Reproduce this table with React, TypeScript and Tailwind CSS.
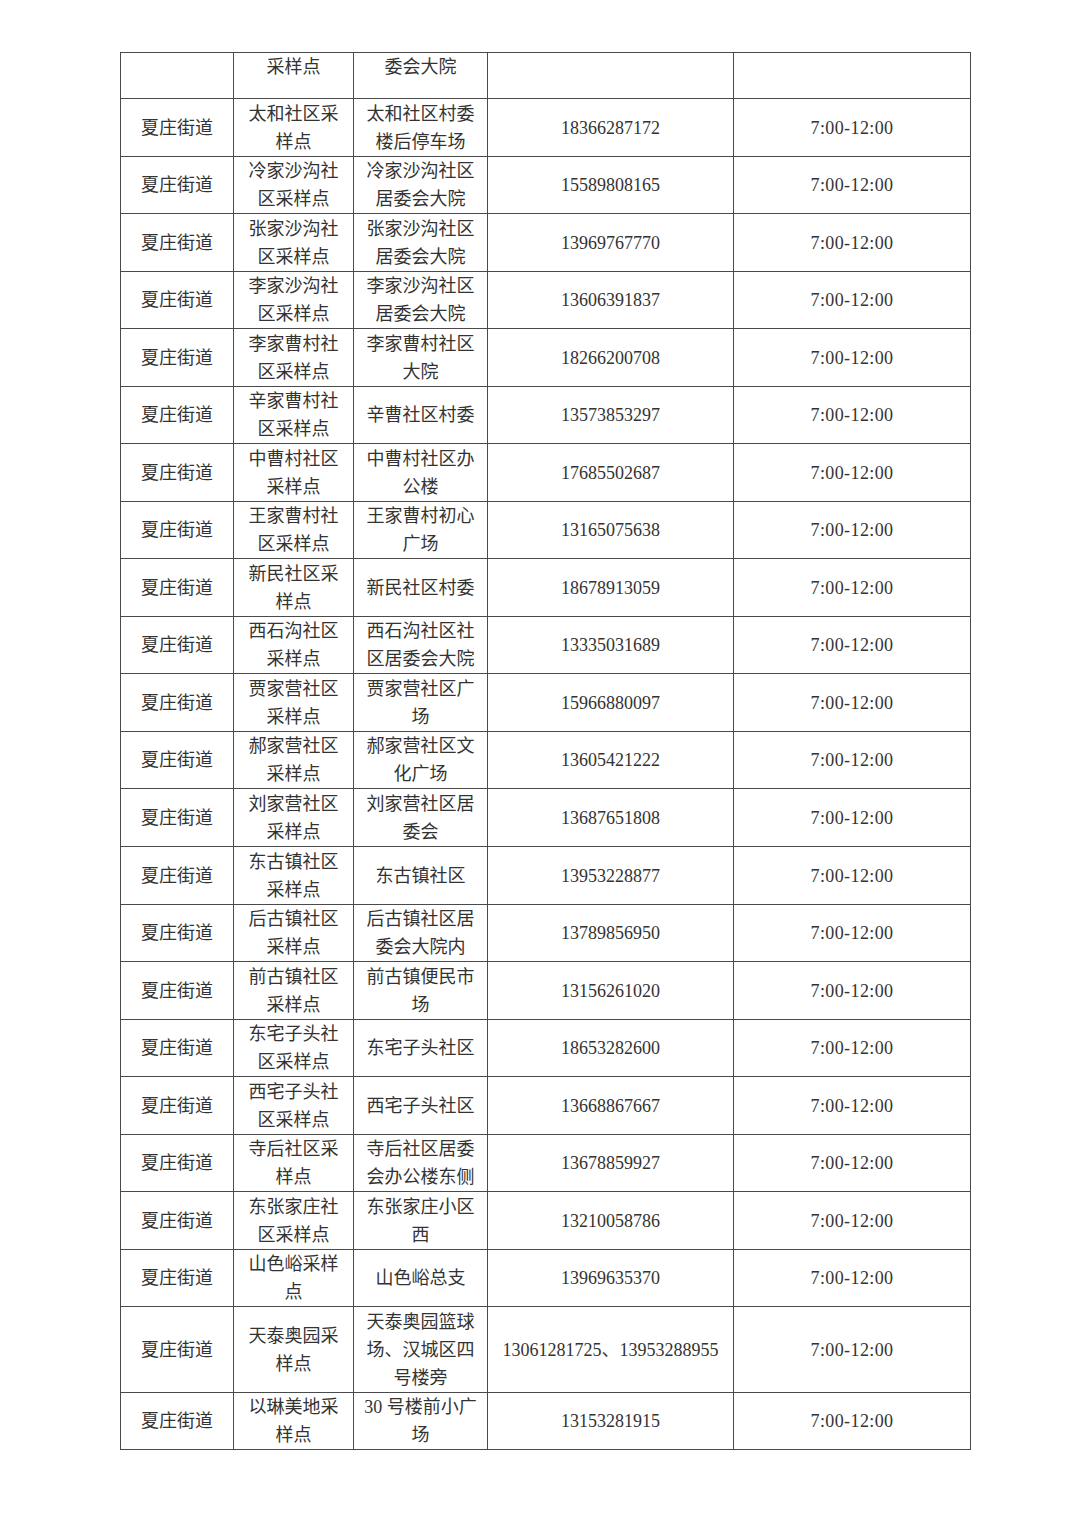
import React from "react"

type Row = {
  d: string
  p: string[]
  a: string[]
  t: string
  h: string
}

const rows: Row[] = [
  { d: "夏庄街道", p: ["太和社区采", "样点"], a: ["太和社区村委", "楼后停车场"], t: "18366287172", h: "h-[58px]" },
  { d: "夏庄街道", p: ["冷家沙沟社", "区采样点"], a: ["冷家沙沟社区", "居委会大院"], t: "15589808165", h: "h-[57px]" },
  { d: "夏庄街道", p: ["张家沙沟社", "区采样点"], a: ["张家沙沟社区", "居委会大院"], t: "13969767770", h: "h-[58px]" },
  { d: "夏庄街道", p: ["李家沙沟社", "区采样点"], a: ["李家沙沟社区", "居委会大院"], t: "13606391837", h: "h-[57px]" },
  { d: "夏庄街道", p: ["李家曹村社", "区采样点"], a: ["李家曹村社区", "大院"], t: "18266200708", h: "h-[58px]" },
  { d: "夏庄街道", p: ["辛家曹村社", "区采样点"], a: ["辛曹社区村委"], t: "13573853297", h: "h-[57px]" },
  { d: "夏庄街道", p: ["中曹村社区", "采样点"], a: ["中曹村社区办", "公楼"], t: "17685502687", h: "h-[58px]" },
  { d: "夏庄街道", p: ["王家曹村社", "区采样点"], a: ["王家曹村初心", "广场"], t: "13165075638", h: "h-[57px]" },
  { d: "夏庄街道", p: ["新民社区采", "样点"], a: ["新民社区村委"], t: "18678913059", h: "h-[58px]" },
  { d: "夏庄街道", p: ["西石沟社区", "采样点"], a: ["西石沟社区社", "区居委会大院"], t: "13335031689", h: "h-[57px]" },
  { d: "夏庄街道", p: ["贾家营社区", "采样点"], a: ["贾家营社区广", "场"], t: "15966880097", h: "h-[58px]" },
  { d: "夏庄街道", p: ["郝家营社区", "采样点"], a: ["郝家营社区文", "化广场"], t: "13605421222", h: "h-[57px]" },
  { d: "夏庄街道", p: ["刘家营社区", "采样点"], a: ["刘家营社区居", "委会"], t: "13687651808", h: "h-[58px]" },
  { d: "夏庄街道", p: ["东古镇社区", "采样点"], a: ["东古镇社区"], t: "13953228877", h: "h-[58px]" },
  { d: "夏庄街道", p: ["后古镇社区", "采样点"], a: ["后古镇社区居", "委会大院内"], t: "13789856950", h: "h-[57px]" },
  { d: "夏庄街道", p: ["前古镇社区", "采样点"], a: ["前古镇便民市", "场"], t: "13156261020", h: "h-[58px]" },
  { d: "夏庄街道", p: ["东宅子头社", "区采样点"], a: ["东宅子头社区"], t: "18653282600", h: "h-[57px]" },
  { d: "夏庄街道", p: ["西宅子头社", "区采样点"], a: ["西宅子头社区"], t: "13668867667", h: "h-[58px]" },
  { d: "夏庄街道", p: ["寺后社区采", "样点"], a: ["寺后社区居委", "会办公楼东侧"], t: "13678859927", h: "h-[57px]" },
  { d: "夏庄街道", p: ["东张家庄社", "区采样点"], a: ["东张家庄小区", "西"], t: "13210058786", h: "h-[58px]" },
  { d: "夏庄街道", p: ["山色峪采样", "点"], a: ["山色峪总支"], t: "13969635370", h: "h-[57px]" },
  { d: "夏庄街道", p: ["天泰奥园采", "样点"], a: ["天泰奥园篮球", "场、汉城区四", "号楼旁"], t: "13061281725、13953288955", h: "h-[86px]" },
  { d: "夏庄街道", p: ["以琳美地采", "样点"], a: ["30 号楼前小广", "场"], t: "13153281915", h: "h-[57px]" },
]

const cell = "border border-[#4a4a4a] text-center align-middle p-0"

function Lines({ items }: { items: string[] }) {
  return (
    <>
      {items.map((s, i) => (
        <div key={i}>{s}</div>
      ))}
    </>
  )
}

export default function App() {
  return (
    <div
      className="min-h-[1528px] w-[1080px] bg-white pt-[52px] pl-[120px] text-[18px] leading-[28px] text-[#333]"
      style={{ fontFamily: '"Liberation Serif", "Noto Sans CJK SC", serif' }}
    >
      <table className="table-fixed border-collapse w-[850px]">
        <colgroup>
          <col className="w-[113px]" />
          <col className="w-[120px]" />
          <col className="w-[134px]" />
          <col className="w-[246px]" />
          <col className="w-[237px]" />
        </colgroup>
        <tbody>
          {/* continued row from previous page */}
          <tr className="h-[46px]">
            <td className={cell}></td>
            <td className={`${cell} !align-top`}>采样点</td>
            <td className={`${cell} !align-top`}>委会大院</td>
            <td className={cell}></td>
            <td className={cell}></td>
          </tr>
          {rows.map((r, i) => (
            <tr key={i} className={r.h}>
              <td className={cell}>{r.d}</td>
              <td className={cell}>
                <Lines items={r.p} />
              </td>
              <td className={cell}>
                <Lines items={r.a} />
              </td>
              <td className={cell}>{r.t}</td>
              <td className={`${cell} tracking-[0.4px]`}>7:00-12:00</td>
            </tr>
          ))}
        </tbody>
      </table>
    </div>
  )
}
